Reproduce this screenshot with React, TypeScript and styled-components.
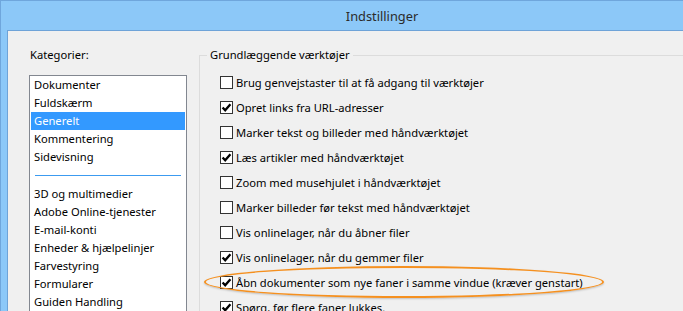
import React from 'react';
import styled, { createGlobalStyle } from 'styled-components';

const GlobalStyle = createGlobalStyle`
  html, body {
    margin: 0;
    padding: 0;
    overflow: hidden;
    background: #8cc8f8;
  }
  body {
    font-family: "Noto Sans", "Open Sans", sans-serif;
    font-size: 11.2px;
    color: #000;
  }
`;

const categories = ['Dokumenter', 'Fuldskærm', 'Generelt', 'Kommentering', 'Sidevisning'];
const moreCategories = [
  '3D og multimedier',
  'Adobe Online-tjenester',
  'E-mail-konti',
  'Enheder & hjælpelinjer',
  'Farvestyring',
  'Formularer',
  'Guiden Handling',
  'Håndtering af adgang',
];

const options = [
  { label: 'Brug genvejstaster til at få adgang til værktøjer', checked: false },
  { label: 'Opret links fra URL-adresser', checked: true },
  { label: 'Marker tekst og billeder med håndværktøjet', checked: false },
  { label: 'Læs artikler med håndværktøjet', checked: true },
  { label: 'Zoom med musehjulet i håndværktøjet', checked: false },
  { label: 'Marker billeder før tekst med håndværktøjet', checked: false },
  { label: 'Vis onlinelager, når du åbner filer', checked: false },
  { label: 'Vis onlinelager, når du gemmer filer', checked: true },
  { label: 'Åbn dokumenter som nye faner i samme vindue (kræver genstart)', checked: true, marked: true },
  { label: 'Spørg, før flere faner lukkes.', checked: true },
];

const Check = ({ checked }: { checked: boolean }) => (
  <Box>
    {checked && (
      <svg width="11" height="11" viewBox="0 0 11 11">
        <path d="M1.6 5.4 L4.2 8.3 L9.4 2.2" fill="none" stroke="#000" strokeWidth="2.3" strokeLinejoin="miter" />
      </svg>
    )}
  </Box>
);

const App = () => (
  <>
    <GlobalStyle />
    <Window>
      <TitleBar>Indstillinger</TitleBar>
      <Content>
        <Sidebar>
          <Label>Kategorier:</Label>
          <ListBox>
            {categories.map((c) => (
              <Item key={c} selected={c === 'Generelt'}>
                {c}
              </Item>
            ))}
            <Separator />
            {moreCategories.map((c) => (
              <Item key={c}>{c}</Item>
            ))}
          </ListBox>
        </Sidebar>
        <Group>
          <Legend>Grundlæggende værktøjer</Legend>
          {options.map((o) => (
            <Row key={o.label}>
              <Check checked={o.checked} />
              <RowText>{o.label}</RowText>
              {o.marked && <Highlight />}
            </Row>
          ))}
        </Group>
      </Content>
    </Window>
  </>
);

const Window = styled.div`
  width: 683px;
  height: 311px;
  display: flex;
  flex-direction: column;
  border-top: 1px solid #6fa6dc;
  border-left: 1px solid #6fa6dc;
  box-sizing: border-box;
  background: #8cc8f8;
  overflow: hidden;
`;

const TitleBar = styled.div`
  height: 29px;
  flex: none;
  display: flex;
  align-items: center;
  justify-content: center;
  padding-left: 80px;
  font-size: 12.8px;
  color: #2b2b2b;
`;

const Content = styled.div`
  flex: 1;
  margin-left: 6px;
  border-top: 1px solid #6ea3d8;
  border-left: 1px solid #6ea3d8;
  background: #f0f0f0;
  display: flex;
  gap: 12px;
  min-height: 0;
`;

const Sidebar = styled.div`
  flex: none;
  width: 158px;
  margin-left: 21px;
  padding-top: 16px;
  display: flex;
  flex-direction: column;
`;

const Label = styled.div`
  line-height: 16px;
  margin-left: 1px;
  margin-bottom: 12px;
`;

const ListBox = styled.div`
  flex: 1;
  background: #fff;
  border: 1px solid #828790;
  border-bottom: none;
  padding: 0 1px;
  overflow: hidden;
`;

const Item = styled.div<{ selected?: boolean }>`
  height: 18px;
  line-height: 18px;
  padding-left: 3px;
  white-space: nowrap;
  background: ${({ selected }) => (selected ? '#3399ff' : 'transparent')};
  color: ${({ selected }) => (selected ? '#fff' : '#000')};
`;

const Separator = styled.div`
  height: 1px;
  margin: 9px 4px 9px 4px;
  background: #3c9bf0;
`;

const Group = styled.fieldset`
  flex: 1;
  margin: 16px 0 0 0;
  padding: 7px 0 0 20px;
  border: none;
  border-top: 1px solid #dcdcdc;
  border-left: 1px solid #dcdcdc;
  min-width: 0;
`;

const Legend = styled.legend`
  margin-left: -13px;
  padding: 0 3px;
  line-height: 16px;
  white-space: nowrap;
`;

const Row = styled.div`
  position: relative;
  height: 25px;
  display: flex;
  align-items: center;
  gap: 3px;
  white-space: nowrap;
`;

const Box = styled.div`
  width: 11px;
  height: 11px;
  flex: none;
  border: 1px solid #333;
  background: #fff;
  display: flex;
  align-items: center;
  justify-content: center;
`;

const RowText = styled.span`
  line-height: 16px;
`;

const Highlight = styled.div`
  position: absolute;
  left: -16px;
  top: -4px;
  width: 396px;
  height: 28px;
  border: 2.5px solid #f5901f;
  border-radius: 50%;
  box-shadow: 0 1px 2px rgba(0, 0, 0, 0.2);
  pointer-events: none;
`;

export default App;
